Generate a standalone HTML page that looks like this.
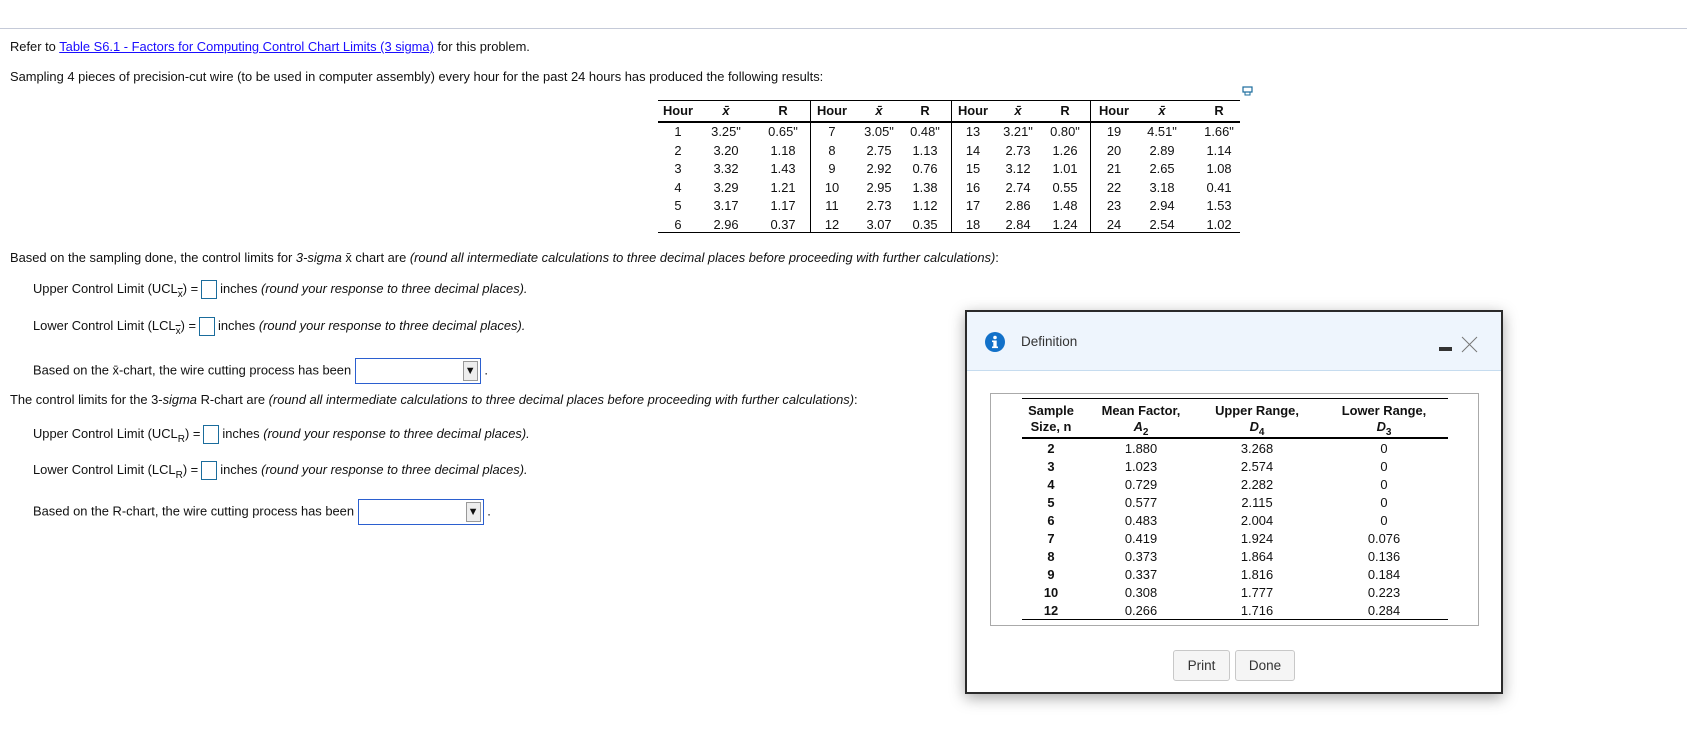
<!DOCTYPE html>
<html><head><meta charset="utf-8"><style>
body{margin:0;width:1687px;height:734px;background:#fff;font-family:"Liberation Sans",Arial,sans-serif;font-size:12.9px;color:#111;position:relative;overflow:hidden}
.a{position:absolute;white-space:nowrap;line-height:16px}
.box{display:inline-block;width:16px;height:19px;border:1px solid #1a6c9c;vertical-align:middle;margin:0 3px;box-sizing:border-box}
.sel{display:inline-block;height:26px;border:1px solid #2b5fcf;vertical-align:middle;position:relative;box-sizing:border-box}
.sel b{position:absolute;right:2px;top:2px;width:15px;height:20px;background:#eee;border:1px solid #999;box-sizing:border-box;font-size:11px;line-height:18px;text-align:center;font-weight:normal}
.ol{text-decoration:overline}
sub{font-size:10px;vertical-align:-4px;line-height:0}
.c{position:absolute;text-align:center;width:60px;margin-left:-30px;line-height:16px}
.hr{position:absolute;background:#000}
i{font-style:italic}
</style></head><body>
<div style="position:absolute;left:0;top:28px;width:1687px;height:1px;background:#c5cad8"></div>
<div class="a" style="left:10px;top:39px">Refer to <span style="color:#1a0dff;text-decoration:underline">Table S6.1 - Factors for Computing Control Chart Limits (3 sigma)</span> for this problem.</div>
<div class="a" style="left:10px;top:69px">Sampling 4 pieces of precision-cut wire (to be used in computer assembly) every hour for the past 24 hours has produced the following results:</div>
<svg style="position:absolute;left:1242px;top:86px" width="12" height="10"><rect x="1" y="1" width="9" height="5" fill="none" stroke="#1a6c9c" stroke-width="1.2"/><rect x="3" y="6" width="5" height="3" fill="none" stroke="#1a6c9c"/></svg>

<div class="hr" style="left:658px;top:100px;width:582px;height:1px"></div>
<div class="hr" style="left:658px;top:121px;width:582px;height:2px"></div>
<div class="hr" style="left:658px;top:232px;width:582px;height:1px"></div>
<div class="hr" style="left:810px;top:100px;width:1px;height:133px"></div>
<div class="hr" style="left:951px;top:100px;width:1px;height:133px"></div>
<div class="hr" style="left:1090px;top:100px;width:1px;height:133px"></div>
<div id="dt"></div>

<div class="a" style="left:10px;top:250px">Based on the sampling done, the control limits for <i>3-sigma</i> x&#x304; chart are <i>(round all intermediate calculations to three decimal places before proceeding with further calculations)</i>:</div>
<div class="a" style="left:33px;top:280px">Upper Control Limit (UCL<sub class="ol">x</sub>) =<span class="box"></span>inches <i>(round your response to three decimal places).</i></div>
<div class="a" style="left:33px;top:317px">Lower Control Limit (LCL<sub class="ol">x</sub>) =<span class="box"></span>inches <i>(round your response to three decimal places).</i></div>
<div class="a" style="left:33px;top:358px">Based on the x&#x304;-chart, the wire cutting process has been <span class="sel" style="width:126px"><b>▼</b></span> .</div>
<div class="a" style="left:10px;top:392px">The control limits for the 3-<i>sigma</i> R-chart are <i>(round all intermediate calculations to three decimal places before proceeding with further calculations)</i>:</div>
<div class="a" style="left:33px;top:425px">Upper Control Limit (UCL<sub>R</sub>) =<span class="box"></span>inches <i>(round your response to three decimal places).</i></div>
<div class="a" style="left:33px;top:461px">Lower Control Limit (LCL<sub>R</sub>) =<span class="box"></span>inches <i>(round your response to three decimal places).</i></div>
<div class="a" style="left:33px;top:499px">Based on the R-chart, the wire cutting process has been <span class="sel" style="width:126px"><b>▼</b></span> .</div>

<div style="position:absolute;left:965px;top:310px;width:538px;height:384px;box-sizing:border-box;border:2px solid #2a2a2a;background:#fff;box-shadow:0 4px 14px rgba(0,0,0,.35)">
 <div style="position:absolute;left:0;top:0;right:0;height:58px;background:#eef5fd;border-bottom:1px solid #c6dcef"></div>
 <svg style="position:absolute;left:18px;top:20px" width="20" height="20"><circle cx="10" cy="10" r="10" fill="#1271c9"/><circle cx="10" cy="5.5" r="1.8" fill="#fff"/><rect x="8.3" y="8.5" width="3.4" height="7.5" fill="#fff"/><rect x="7" y="8.5" width="3" height="1.6" fill="#fff"/><rect x="7" y="14.5" width="6" height="1.6" fill="#fff"/></svg>
 <div class="a" style="left:54px;top:22px;color:#333;font-size:13.5px">Definition</div>
 <div style="position:absolute;left:472px;top:35px;width:13px;height:4px;background:#333"></div>
 <svg style="position:absolute;left:494px;top:24px" width="17" height="17"><path d="M1 1L16 16M16 1L1 16" stroke="#777" stroke-width="1"/></svg>
 <div style="position:absolute;left:23px;top:81px;width:489px;height:233px;border:1px solid #aaa;box-sizing:border-box"></div>
 <div class="hr" style="left:55px;top:86px;width:426px;height:1px"></div>
 <div class="hr" style="left:55px;top:125px;width:426px;height:2px"></div>
 <div class="hr" style="left:55px;top:307px;width:426px;height:1px"></div>
 <div id="mt"></div>
 <div style="position:absolute;left:206px;top:338px;width:55px;height:29px;border:1px solid #c8c8c8;border-radius:3px;background:#f5f5f5;text-align:center;line-height:29px;color:#333;font-size:13.5px">Print</div>
 <div style="position:absolute;left:268px;top:338px;width:58px;height:29px;border:1px solid #c8c8c8;border-radius:3px;background:#f5f5f5;text-align:center;line-height:29px;color:#333;font-size:13.5px">Done</div>
</div>

<div>
<div class="c" style="left:678px;top:103px;font-weight:bold">Hour</div><div class="c" style="left:726px;top:103px;font-weight:bold;font-style:italic">x&#x304;</div><div class="c" style="left:783px;top:103px;font-weight:bold">R</div>
<div class="c" style="left:832px;top:103px;font-weight:bold">Hour</div><div class="c" style="left:879px;top:103px;font-weight:bold;font-style:italic">x&#x304;</div><div class="c" style="left:925px;top:103px;font-weight:bold">R</div>
<div class="c" style="left:973px;top:103px;font-weight:bold">Hour</div><div class="c" style="left:1018px;top:103px;font-weight:bold;font-style:italic">x&#x304;</div><div class="c" style="left:1065px;top:103px;font-weight:bold">R</div>
<div class="c" style="left:1114px;top:103px;font-weight:bold">Hour</div><div class="c" style="left:1162px;top:103px;font-weight:bold;font-style:italic">x&#x304;</div><div class="c" style="left:1219px;top:103px;font-weight:bold">R</div>
</div>
<script>
var d=[[1,'3.25"','0.65"',7,'3.05"','0.48"',13,'3.21"','0.80"',19,'4.51"','1.66"'],
[2,'3.20','1.18',8,'2.75','1.13',14,'2.73','1.26',20,'2.89','1.14'],
[3,'3.32','1.43',9,'2.92','0.76',15,'3.12','1.01',21,'2.65','1.08'],
[4,'3.29','1.21',10,'2.95','1.38',16,'2.74','0.55',22,'3.18','0.41'],
[5,'3.17','1.17',11,'2.73','1.12',17,'2.86','1.48',23,'2.94','1.53'],
[6,'2.96','0.37',12,'3.07','0.35',18,'2.84','1.24',24,'2.54','1.02']];
var xs=[678,726,783,832,879,925,973,1018,1065,1114,1162,1219],h='';
d.forEach(function(r,i){r.forEach(function(v,j){h+='<div class="c" style="left:'+xs[j]+'px;top:'+(124+i*18.5)+'px">'+v+'</div>';});});
document.getElementById('dt').innerHTML=h;
var m=[[2,'1.880','3.268','0'],[3,'1.023','2.574','0'],[4,'0.729','2.282','0'],[5,'0.577','2.115','0'],[6,'0.483','2.004','0'],[7,'0.419','1.924','0.076'],[8,'0.373','1.864','0.136'],[9,'0.337','1.816','0.184'],[10,'0.308','1.777','0.223'],[12,'0.266','1.716','0.284']];
var mx=[84,174,290,417];
h='<div class="c" style="left:84px;top:91px;font-weight:bold;width:90px;margin-left:-45px">Sample<br>Size, n</div>'+
'<div class="c" style="left:174px;top:91px;font-weight:bold;width:120px;margin-left:-60px">Mean Factor,<br><i>A</i><sub>2</sub></div>'+
'<div class="c" style="left:290px;top:91px;font-weight:bold;width:120px;margin-left:-60px">Upper Range,<br><i>D</i><sub>4</sub></div>'+
'<div class="c" style="left:417px;top:91px;font-weight:bold;width:120px;margin-left:-60px">Lower Range,<br><i>D</i><sub>3</sub></div>';
m.forEach(function(r,i){r.forEach(function(v,j){h+='<div class="c" style="left:'+mx[j]+'px;top:'+(129+i*18)+'px;'+(j==0?'font-weight:bold':'')+'">'+v+'</div>';});});
document.getElementById('mt').innerHTML=h;
</script>
</body></html>
